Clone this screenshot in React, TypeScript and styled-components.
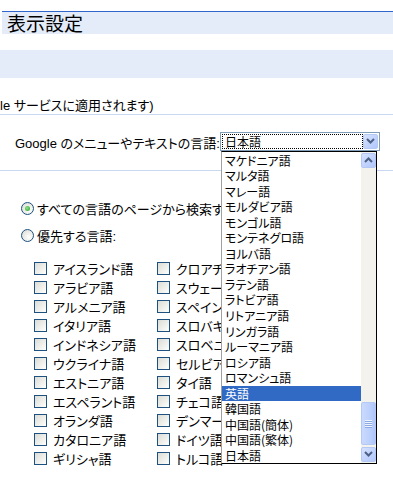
import React from "react";
import styled, { createGlobalStyle } from "styled-components";

const GlobalStyle = createGlobalStyle`
  html, body { margin: 0; padding: 0; background: #fff; }
  body {
    font-family: "Liberation Sans", "Noto Sans CJK JP", sans-serif;
    font-size: 13px;
    color: #000;
    font-feature-settings: "palt";
    overflow: hidden;
  }
`;

const Page = styled.div`
  width: 393px;
  height: 481px;
  position: relative;
  overflow: hidden;
`;

const TitleBar = styled.div`
  margin: 11px 0 0 2px;
  height: 22px;
  border-top: 1px solid #3366cc;
  background: #e5ecf9;
  padding-left: 5px;
  font-size: 19px;
  line-height: 22px;
  font-family: "Noto Sans CJK JP", sans-serif;
`;

const SectionBar = styled.div`
  margin-top: 16px;
  height: 28px;
  background: #e5ecf9;
`;

const Note = styled.div`
  margin-top: 19px;
  height: 17px;
  line-height: 17px;
  white-space: nowrap;
  border-bottom: 1px solid #c9d7f1;
`;

const LangRow = styled.div`
  display: flex;
  align-items: center;
  height: 55px;
  padding-left: 15px;
  border-bottom: 1px solid #c9d7f1;
`;

const LangLabel = styled.span`
  width: 205px;
  white-space: nowrap;
`;

const SelectWrap = styled.div`
  position: relative;
  margin-top: -3px;
`;

const SelectBox = styled.div`
  width: 156px;
  height: 17px;
  border: 1px solid #7f9db9;
  display: flex;
  align-items: center;
  padding: 0 1px;
  background: #fff;
`;

const SelectValue = styled.div`
  flex: 1;
  height: 13px;
  border: 1px dotted #000;
  line-height: 13px;
  padding-left: 2px;
  font-size: 12px;
  font-family: "Noto Sans CJK JP", sans-serif;
`;

const ArrowButton = styled.div`
  width: 15px;
  height: 15px;
  box-sizing: border-box;
  border: 1px solid #b4c8f6;
  border-radius: 2px;
  background: linear-gradient(135deg, #d6e2fe 0%, #bfd1fc 60%, #b2c7fb 100%);
  display: flex;
  align-items: center;
  justify-content: center;
`;

const DropList = styled.div`
  position: absolute;
  top: 19px;
  left: 1px;
  width: 156px;
  height: 313px;
  box-sizing: border-box;
  border: 1px solid #000;
  border-left-color: #a0a0a0;
  background: #fff;
  display: flex;
  z-index: 5;
`;

const Items = styled.div`
  flex: 1;
  padding-top: 1px;
  font-family: "Noto Sans CJK JP", sans-serif;
  font-size: 12px;
`;

const Item = styled.div<{ $selected?: boolean }>`
  height: 15.55px;
  line-height: 15.55px;
  padding-left: 3px;
  white-space: nowrap;
  background: ${(p) => (p.$selected ? "#316ac5" : "transparent")};
  color: ${(p) => (p.$selected ? "#fff" : "#000")};
`;

const ScrollBar = styled.div`
  width: 15px;
  background: #f3f2ec;
  display: flex;
  flex-direction: column;
  justify-content: space-between;
  padding: 1px 0;
`;

const ScrollBottom = styled.div`
  display: flex;
  flex-direction: column;
  gap: 2px;
`;

const Thumb = styled.div`
  height: 43px;
  box-sizing: border-box;
  border: 1px solid #b4c8f6;
  border-radius: 2px;
  background: linear-gradient(90deg, #cadafd 0%, #bcd0fc 60%, #b0c6fa 100%);
  display: flex;
  flex-direction: column;
  align-items: center;
  justify-content: center;
  gap: 1px;
`;

const Grip = styled.div`
  width: 7px;
  height: 1px;
  background: #eef3ff;
  box-shadow: 0 1px 0 #8ca8e6;
`;

const RadioRow = styled.label<{ $top: number }>`
  display: flex;
  align-items: center;
  height: 20px;
  margin-top: ${(p) => p.$top}px;
  padding-left: 21px;
  gap: 3px;
  white-space: nowrap;
`;

const RadioCircle = styled.span<{ $checked?: boolean }>`
  width: 13px;
  height: 13px;
  box-sizing: border-box;
  border-radius: 50%;
  border: 1px solid #1c5180;
  background: radial-gradient(circle at 65% 65%, #ffffff 0%, #e8e8e2 60%, #d6d6ce 100%);
  display: flex;
  align-items: center;
  justify-content: center;
  flex: none;
  &::after {
    content: "";
    display: ${(p) => (p.$checked ? "block" : "none")};
    width: 5px;
    height: 5px;
    border-radius: 50%;
    background: radial-gradient(circle at 40% 40%, #8ee08e, #21a121);
  }
`;

const CheckGrid = styled.div`
  display: grid;
  grid-template-columns: 123px 123px;
  grid-auto-flow: column;
  grid-template-rows: repeat(11, 19px);
  margin-top: 14px;
  padding-left: 34px;
`;

const CheckRow = styled.label`
  display: flex;
  align-items: center;
  gap: 6px;
  white-space: nowrap;
`;

const CheckBox = styled.span`
  width: 13px;
  height: 13px;
  box-sizing: border-box;
  border: 1px solid #1c5180;
  background: linear-gradient(135deg, #dcdcd7 0%, #f0f0ec 60%, #ffffff 100%);
  flex: none;
`;

const Chevron = ({ up }: { up?: boolean }) => (
  <svg width="9" height="6" viewBox="0 0 9 6">
    <polyline
      points={up ? "1,5 4.5,1.5 8,5" : "1,1 4.5,4.5 8,1"}
      fill="none"
      stroke="#4d6185"
      strokeWidth="2"
    />
  </svg>
);

const options = [
  "マケドニア語",
  "マルタ語",
  "マレー語",
  "モルダビア語",
  "モンゴル語",
  "モンテネグロ語",
  "ヨルバ語",
  "ラオチアン語",
  "ラテン語",
  "ラトビア語",
  "リトアニア語",
  "リンガラ語",
  "ルーマニア語",
  "ロシア語",
  "ロマンシュ語",
  "英語",
  "韓国語",
  "中国語(簡体)",
  "中国語(繁体)",
  "日本語",
];

const langs = [
  "アイスランド語",
  "アラビア語",
  "アルメニア語",
  "イタリア語",
  "インドネシア語",
  "ウクライナ語",
  "エストニア語",
  "エスペラント語",
  "オランダ語",
  "カタロニア語",
  "ギリシャ語",
  "クロアチア語",
  "スウェーデン語",
  "スペイン語",
  "スロバキア語",
  "スロベニア語",
  "セルビア語",
  "タイ語",
  "チェコ語",
  "デンマーク語",
  "ドイツ語",
  "トルコ語",
];

export default function App() {
  return (
    <Page>
      <GlobalStyle />
      <TitleBar>表示設定</TitleBar>
      <SectionBar />
      <Note>le サービスに適用されます)</Note>
      <LangRow>
        <LangLabel>Google のメニューやテキストの言語:</LangLabel>
        <SelectWrap>
          <SelectBox>
            <SelectValue>日本語</SelectValue>
            <ArrowButton>
              <Chevron />
            </ArrowButton>
          </SelectBox>
          <DropList>
            <Items>
              {options.map((o) => (
                <Item key={o} $selected={o === "英語"}>
                  {o}
                </Item>
              ))}
            </Items>
            <ScrollBar>
              <ArrowButton>
                <Chevron up />
              </ArrowButton>
              <ScrollBottom>
                <Thumb>
                  <Grip />
                  <Grip />
                  <Grip />
                  <Grip />
                </Thumb>
                <ArrowButton>
                  <Chevron />
                </ArrowButton>
              </ScrollBottom>
            </ScrollBar>
          </DropList>
        </SelectWrap>
      </LangRow>
      <RadioRow $top={27}>
        <RadioCircle $checked />
        すべての言語のページから検索する (推奨)
      </RadioRow>
      <RadioRow $top={7}>
        <RadioCircle />
        優先する言語:
      </RadioRow>
      <CheckGrid>
        {langs.map((l) => (
          <CheckRow key={l}>
            <CheckBox />
            {l}
          </CheckRow>
        ))}
      </CheckGrid>
    </Page>
  );
}
